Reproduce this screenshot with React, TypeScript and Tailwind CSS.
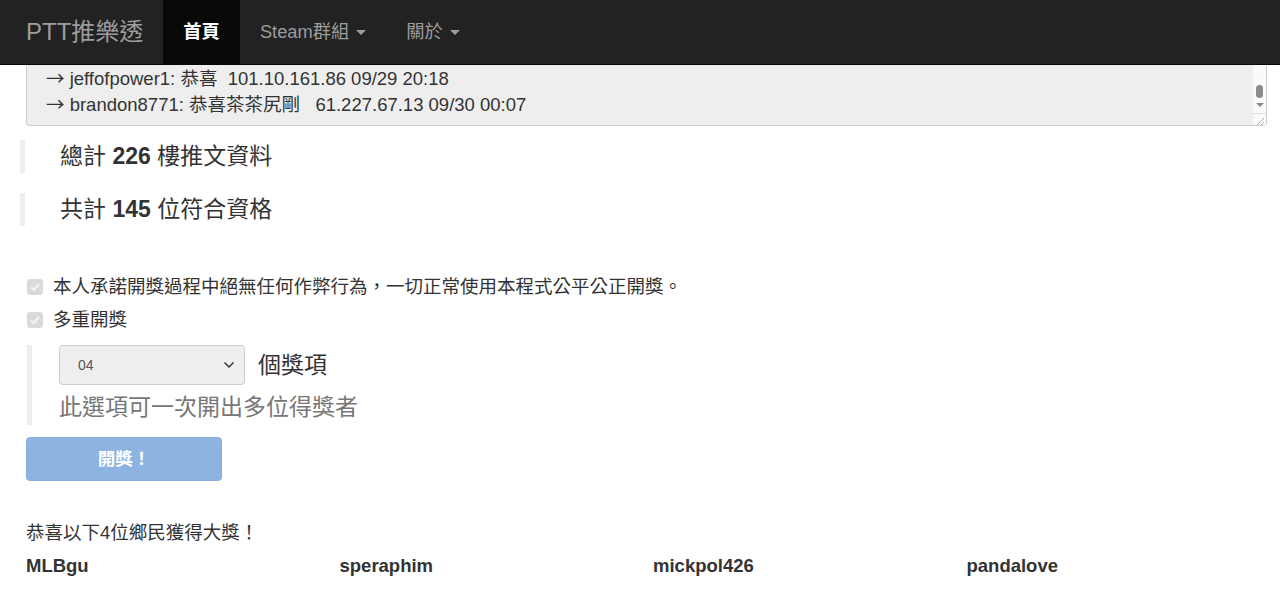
import React from "react";

const font = { fontFamily: '"Liberation Sans", Arial, "Noto Sans CJK TC", sans-serif' };
const arrowFont = { fontFamily: '"Noto Sans CJK TC", sans-serif' };

const Caret = () => (
  <span className="ml-[7px] inline-block h-0 w-0 border-x-[5px] border-t-[5px] border-x-transparent border-t-current align-middle" />
);

const Check = () => (
  <span className="flex h-[16px] w-[16px] items-center justify-center rounded-[3px] bg-[#dadada]">
    <svg width="12" height="12" viewBox="0 0 12 12">
      <path d="M2 6.3 L4.8 9 L10 3" fill="none" stroke="#f4f4f4" strokeWidth="2" />
    </svg>
  </span>
);

const Arrow = () => (
  <span className="leading-none" style={arrowFont}>
    →
  </span>
);

const winners = ["MLBgu", "speraphim", "mickpol426", "pandalove"];

export default function App() {
  return (
    <div className="min-h-[590px] bg-white text-[#333]" style={font}>
      <nav className="flex h-[65px] items-stretch border-b border-[#080808] bg-[#222] text-[18.3px] text-[#9d9d9d]">
        <span className="flex items-center pl-[26px] pr-[20px] text-[24px]">PTT推樂透</span>
        <span className="flex items-center bg-[#080808] px-[20px] font-bold text-white">首頁</span>
        <span className="flex items-center px-[20px]">
          Steam群組
          <Caret />
        </span>
        <span className="flex items-center px-[20px]">
          關於
          <Caret />
        </span>
      </nav>

      <div className="pl-[26px] pr-[13px]">
        <div className="flex h-[61px] rounded-b-[4px] border border-t-0 border-[#ccc] bg-[#eee]">
          <div className="flex-1 pl-[19px] pt-[1px] text-[18.5px] leading-[26px] text-[#333]">
            <div className="h-[26px]">
              <Arrow /> jeffofpower1: 恭喜&nbsp;&nbsp;101.10.161.86 09/29 20:18
            </div>
            <div className="h-[26px]">
              <Arrow /> brandon8771: 恭喜茶茶尻剛&nbsp;&nbsp;&nbsp;61.227.67.13 09/30 00:07
            </div>
          </div>
          <div className="relative w-[13px] bg-[#fafafa]">
            <div className="absolute left-[3px] top-[20px] h-[13px] w-[7px] rounded-full bg-[#8a8a8a]" />
            <div className="absolute left-[3px] top-[38px] h-0 w-0 border-x-[4px] border-t-[4px] border-x-transparent border-t-[#8a8a8a]" />
            <div className="absolute bottom-0 left-0 h-[12px] w-[13px] border-t border-[#ddd]">
              <svg width="13" height="12" viewBox="0 0 13 12">
                <path d="M4 11 L11 4 M8 11 L11 8" stroke="#aaa" strokeWidth="1" />
              </svg>
            </div>
          </div>
        </div>
      </div>

      <div className="mt-[14px] pl-[20px]">
        <div className="flex h-[33px] items-center border-l-[5px] border-[#eee] pl-[35px] text-[23px]">
          總計&nbsp;<b>226</b>&nbsp;樓推文資料
        </div>
        <div className="mt-[20px] flex h-[33px] items-center border-l-[5px] border-[#eee] pl-[35px] text-[23px]">
          共計&nbsp;<b>145</b>&nbsp;位符合資格
        </div>
      </div>

      <div className="mt-[52px] pl-[27px] text-[18.5px]">
        <label className="flex h-[17px] items-center gap-[10px]">
          <Check />
          本人承諾開獎過程中絕無任何作弊行為，一切正常使用本程式公平公正開獎。
        </label>
        <label className="mt-[16px] flex h-[17px] items-center gap-[10px]">
          <Check />
          多重開獎
        </label>

        <div className="mt-[17px] h-[80px] border-l-[5px] border-[#eee] pl-[27px]">
          <div className="flex items-center gap-[13px]">
            <div className="flex h-[40px] w-[186px] items-center justify-between rounded-[4px] border border-[#ccc] bg-[#efefef] pl-[18px] pr-[9px] text-[14px] text-[#555]">
              04
              <svg width="12" height="8" viewBox="0 0 12 8">
                <path d="M1.5 1.5 L6 6 L10.5 1.5" fill="none" stroke="#333" strokeWidth="1.5" />
              </svg>
            </div>
            <span className="text-[23px]">個獎項</span>
          </div>
          <div className="mt-[7px] text-[23px] leading-[30px] text-[#777]">此選項可一次開出多位得獎者</div>
        </div>

        <button className="ml-[-1px] mt-[12px] flex h-[44px] w-[196px] items-center justify-center rounded-[4px] border border-[#88acdb] bg-[#8db3e0] text-[17.5px] font-bold text-white">
          開獎！
        </button>
      </div>

      <div className="mt-[40px] pl-[26px] text-[18.5px]">
        <div className="leading-[24px]">恭喜以下4位鄉民獲得大獎！</div>
        <div className="mt-[9px] grid w-[1254px] grid-cols-4 font-bold leading-[24px]">
          {winners.map((w) => (
            <div key={w}>{w}</div>
          ))}
        </div>
      </div>
    </div>
  );
}
